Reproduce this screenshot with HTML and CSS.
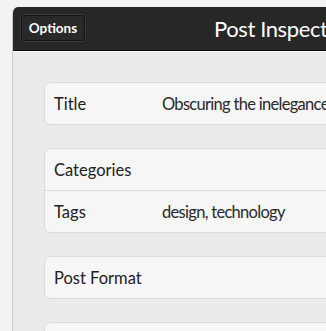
FILE: index.html
```html
<!DOCTYPE html>
<html lang="en">
<head>
  <meta charset="UTF-8" />
  <title>Post Inspector</title>
  <link rel="stylesheet" href="styles.css">
</head>
<body>
  <div class="window">
    <div class="toolbar">
      <button class="btn-options">Options</button>
      <h1 class="toolbar-title">Post Inspector</h1>
    </div>

    <div class="content">
      <div class="group">
        <div class="row"><span class="label">Title</span><span class="value">Obscuring the inelegance of code</span></div>
      </div>

      <div class="group">
        <div class="row"><span class="label">Categories</span><span class="value"></span></div>
        <div class="row"><span class="label">Tags</span><span class="value">design, technology</span></div>
      </div>

      <div class="group">
        <div class="row"><span class="label">Post Format</span><span class="value"></span></div>
      </div>

      <div class="group">
        <div class="row"><span class="label">Status</span><span class="value"></span></div>
      </div>
    </div>
  </div>
</body>
</html>
```

FILE: styles.css
```css
html, body {
  overflow: hidden;
}

body {
  margin: 0;
  background: #f3f3f3;
  font-family: 'Lato', 'Open Sans', sans-serif;
  color: #222;
}

.window {
  margin: 7px 0 0 12px;
  width: 600px;
  height: 400px;
  border-left: 1px solid #c9c9c9;
  border-top-left-radius: 6px;
  overflow: hidden;
  background: #ebebeb;
}

.toolbar {
  height: 43px;
  background: #272727;
  border-bottom: 1px solid #0e0e0e;
  box-shadow: 0 1px 0 #f8f8f8;
  display: flex;
  align-items: center;
  padding-left: 7px;
}

.btn-options {
  height: 28px;
  width: 66px;
  margin-top: -1px;
  padding: 0;
  background: #292929;
  border: 1px solid #3a3a3a;
  border-radius: 4px;
  box-shadow: inset 0 0 0 1px #141414;
  color: #fff;
  font-family: inherit;
  font-weight: 700;
  font-size: 13.5px;
}

.toolbar-title {
  margin: 0 0 0 128px;
  font-weight: 400;
  font-size: 22px;
  letter-spacing: -0.4px;
  color: #fff;
  white-space: nowrap;
}

.content {
  padding: 31px 0 0 31px;
}

.group {
  width: 500px;
  background: #f6f6f6;
  border: 1px solid #dadada;
  border-radius: 6px;
  margin-bottom: 23px;
}

.row {
  height: 41px;
  display: flex;
  align-items: center;
  padding-left: 9px;
  font-size: 16.5px;
}

.row + .row {
  border-top: 1px solid #dcdcdc;
}

.label {
  width: 108px;
}

.value {
  white-space: nowrap;
  letter-spacing: -0.7px;
  color: #2a2a2a;
}
```
